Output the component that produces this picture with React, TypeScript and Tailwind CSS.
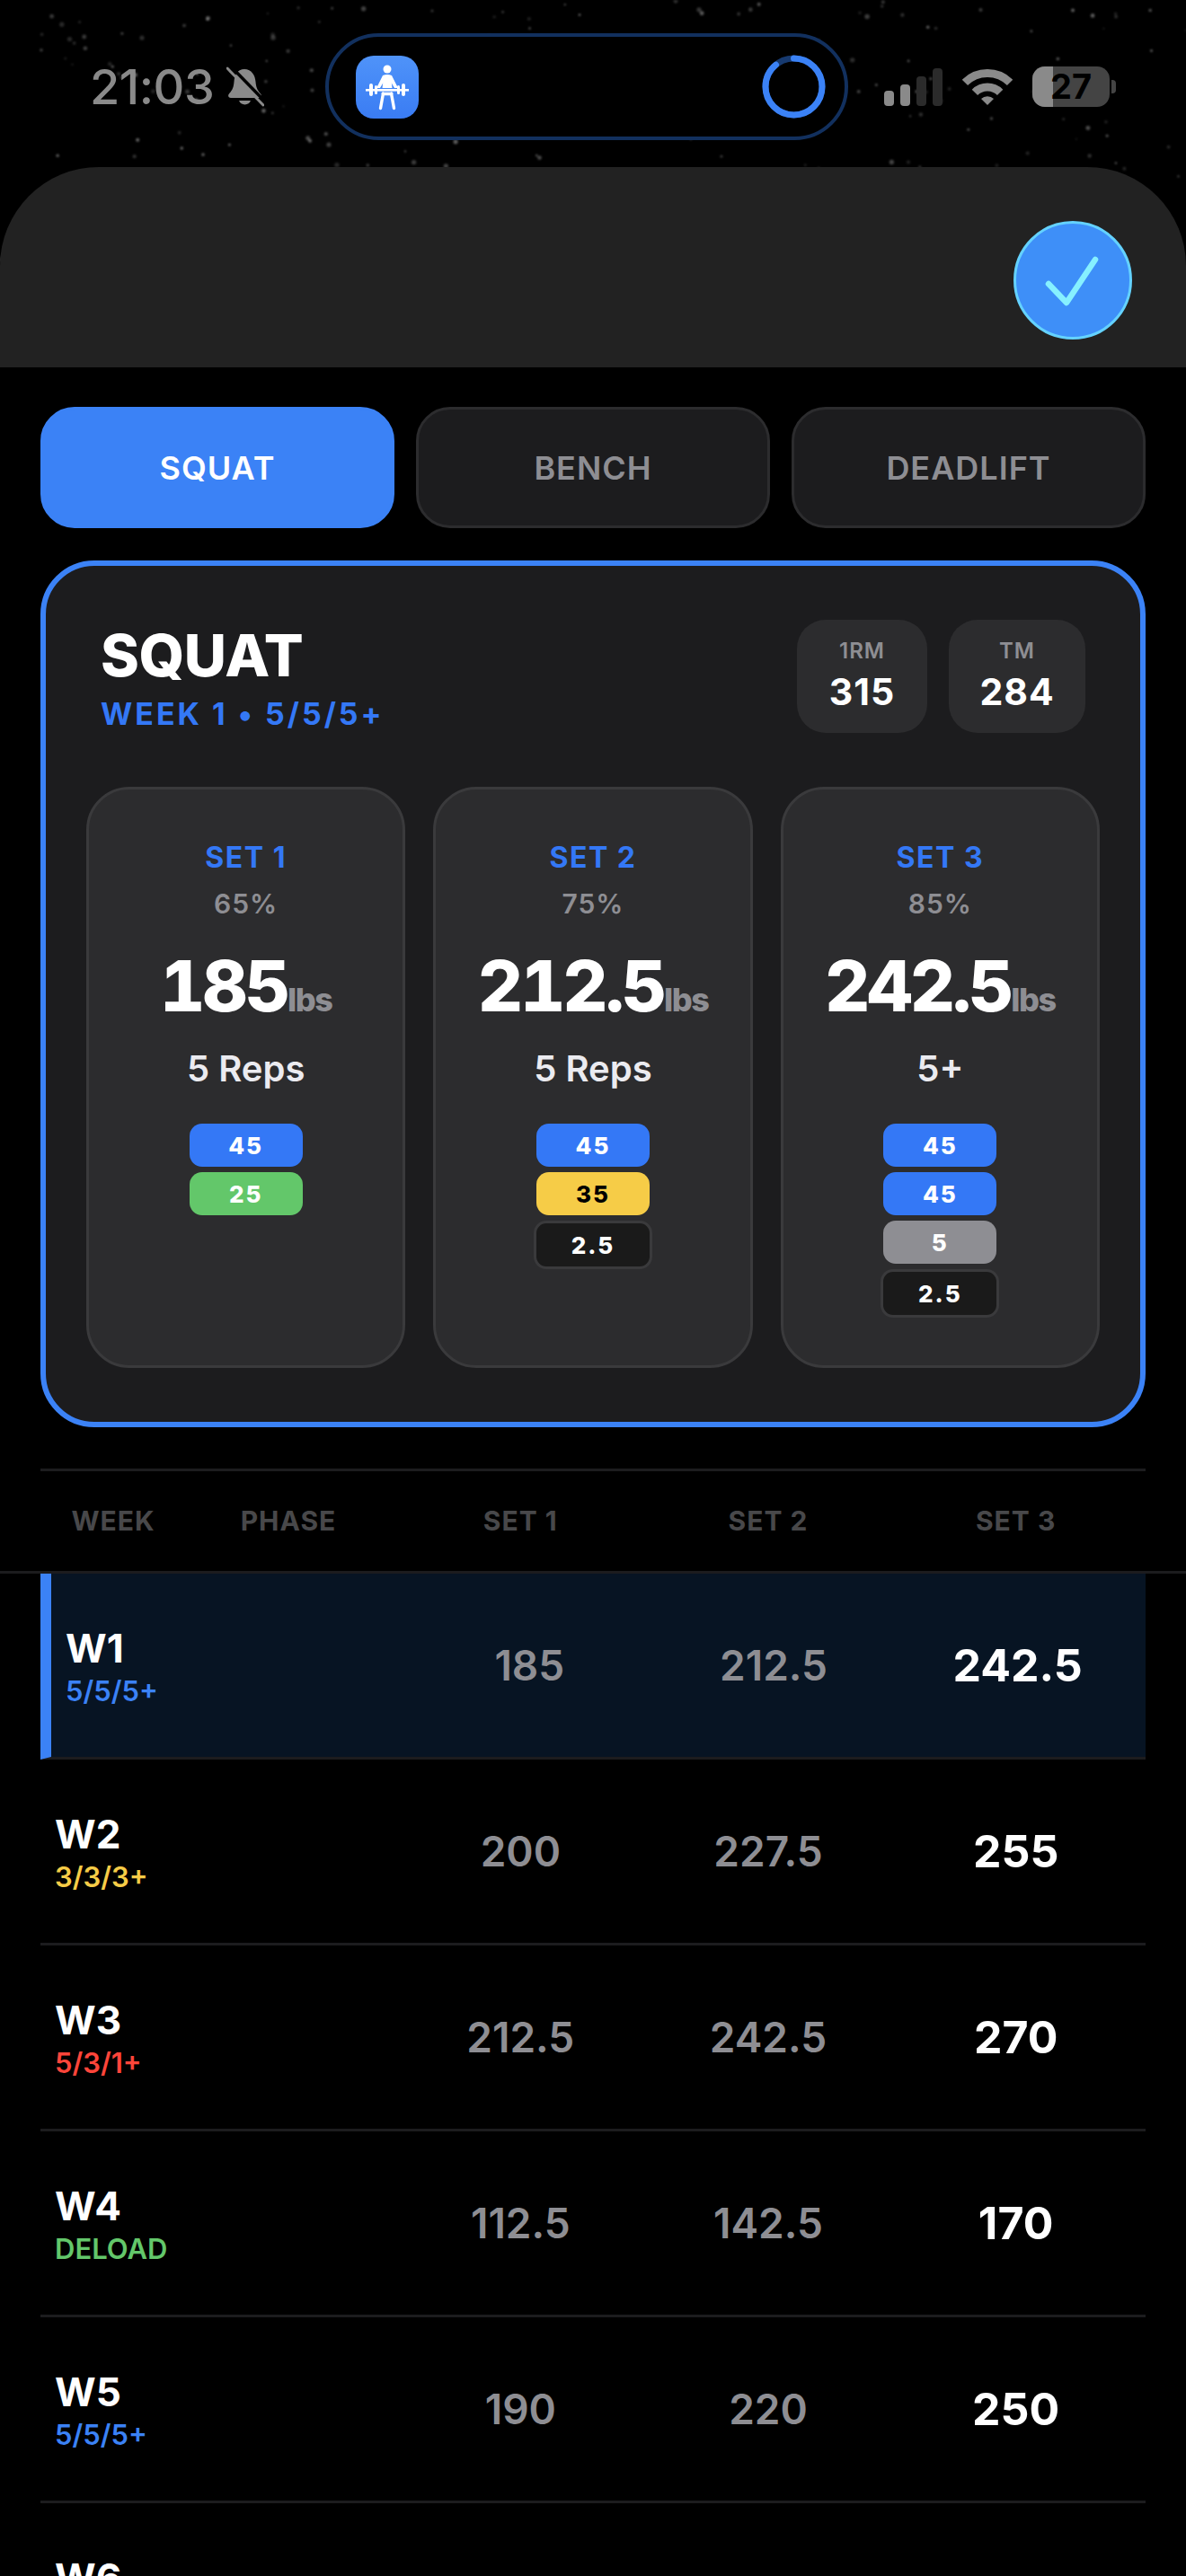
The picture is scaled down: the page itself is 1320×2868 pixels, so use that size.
import React from 'react'

type Plate = { label: string; kind: 'blue' | 'green' | 'yellow' | 'gray' | 'dark' }

const sets: { name: string; pct: string; weight: string; reps: string; plates: Plate[] }[] = [
    { name: 'SET 1', pct: '65%', weight: '185', reps: '5 Reps', plates: [{ label: '45', kind: 'blue' }, { label: '25', kind: 'green' }] },
    { name: 'SET 2', pct: '75%', weight: '212.5', reps: '5 Reps', plates: [{ label: '45', kind: 'blue' }, { label: '35', kind: 'yellow' }, { label: '2.5', kind: 'dark' }] },
    { name: 'SET 3', pct: '85%', weight: '242.5', reps: '5+', plates: [{ label: '45', kind: 'blue' }, { label: '45', kind: 'blue' }, { label: '5', kind: 'gray' }, { label: '2.5', kind: 'dark' }] },
]

const plateStyles: Record<Plate['kind'], string> = {
    blue: 'bg-[#3478f6] text-white',
    green: 'bg-[#63c76a] text-white',
    yellow: 'bg-[#f6cc47] text-black',
    gray: 'bg-[#8e8e93] text-white',
    dark: 'bg-[#1a1a1a] text-white border-[3px] border-[#3a3a3c] box-content',
}

const rows = [
    { week: 'W1', phase: '5/5/5+', color: 'text-[#3b82f6]', a: '185', b: '212.5', c: '242.5', active: true },
    { week: 'W2', phase: '3/3/3+', color: 'text-[#f6cc47]', a: '200', b: '227.5', c: '255' },
    { week: 'W3', phase: '5/3/1+', color: 'text-[#ff453a]', a: '212.5', b: '242.5', c: '270' },
    { week: 'W4', phase: 'DELOAD', color: 'text-[#63c76a]', a: '112.5', b: '142.5', c: '170' },
    { week: 'W5', phase: '5/5/5+', color: 'text-[#3b82f6]', a: '190', b: '220', c: '250' },
    { week: 'W6', phase: '3/3/3+', color: 'text-[#f6cc47]', a: '', b: '', c: '' },
]

// fixed star field behind the status bar
const stars = (() => {
    let seed = 4711
    const rnd = () => {
        seed = (seed * 16807) % 2147483647
        return seed / 2147483647
    }
    return Array.from({ length: 300 }, () => ({
        x: rnd() * 1320,
        y: rnd() * 330,
        r: 1 + rnd() * 1.8,
        o: 0.1 + rnd() * 0.28,
    }))
})()

const BarbellIcon = () => (
    <svg viewBox="0 0 70 70" className="w-[70px] h-[70px]" fill="none">
        <circle cx="35" cy="15" r="4.5" fill="#fff" />
        <path d="M30 22 Q35 20 40 22 L47 36 H43 L39.5 30 H30.5 L27 36 H23 Z" fill="#fff" />
        <path d="M30.5 27 L29.5 36 H40.5 L39.5 27 Z" fill="#fff" />
        <rect x="11" y="37" width="48" height="2.6" fill="#fff" />
        <rect x="15" y="31" width="4" height="14" rx="2" fill="#fff" />
        <rect x="51" y="31" width="4" height="14" rx="2" fill="#fff" />
        <rect x="21" y="33" width="3" height="10" rx="1.5" fill="#fff" />
        <rect x="46" y="33" width="3" height="10" rx="1.5" fill="#fff" />
        <path d="M30.5 42 L27.5 58.5 M39.5 42 L42.5 58.5 M30 42.5 H40" stroke="#fff" strokeWidth="3.4" strokeLinecap="round" />
    </svg>
)

const BellSlash = () => (
    <svg viewBox="0 0 42 46" className="w-[42px] h-[46px]">
        <path d="M20 3 C12 3 9 10 8.5 17 C8 25 5 28 2.5 31 C1.5 33 2.5 35 5 35 H36 C38.5 35 39.5 33 38.5 31 C36 28 33 25 32.5 17 C32 10 28 3 20 3 Z" fill="#8a8a8a" />
        <path d="M14 38 A7 7 0 0 0 27 38 Z" fill="#8a8a8a" />
        <path d="M4 -1 L42 38" stroke="#000" strokeWidth="3.5" />
        <path d="M1 2 L41 43" stroke="#8a8a8a" strokeWidth="3" strokeLinecap="round" />
    </svg>
)

const Signal = () => (
    <svg viewBox="0 0 65 42" className="w-[65px] h-[42px]">
        <rect x="0" y="25" width="11" height="17" rx="4" fill="#8a8a8a" />
        <rect x="18" y="18" width="11" height="24" rx="4" fill="#8a8a8a" />
        <rect x="36" y="9" width="11" height="33" rx="4" fill="#2b2b2b" />
        <rect x="54" y="0" width="11" height="42" rx="4" fill="#2b2b2b" />
    </svg>
)

const Wifi = () => (
    <svg viewBox="0 0 56 42" className="w-[56px] h-[42px]" fill="none">
        <path d="M2.9 15.9 A35.5 35.5 0 0 1 53.1 15.9" stroke="#8a8a8a" strokeWidth="9" />
        <path d="M13.9 26.9 A20 20 0 0 1 42.1 26.9" stroke="#8a8a8a" strokeWidth="9" />
        <path d="M28 41 L21 34 A10 10 0 0 1 35 34 Z" fill="#8a8a8a" />
    </svg>
)

const Ring = () => (
    <svg viewBox="0 0 71 71" className="w-[71px] h-[71px]" fill="none">
        <circle cx="35.5" cy="35.5" r="31.5" stroke="#173a70" strokeWidth="7" />
        <circle cx="35.5" cy="35.5" r="31.5" stroke="#3b82f6" strokeWidth="7" strokeLinecap="round" strokeDasharray="176 198" transform="rotate(-90 35.5 35.5)" />
    </svg>
)

const App = () => {
    return (
        <div className="relative w-[1320px] h-[2868px] overflow-hidden bg-black text-white [font-family:Inter,sans-serif]">
            {/* Stars */}
            <svg viewBox="0 0 1320 330" className="absolute top-0 left-0 w-[1320px] h-[330px] blur-[1px]">
                {stars.map((s, i) => (
                    <circle key={i} cx={s.x} cy={s.y} r={s.r} fill="#fff" opacity={s.o} />
                ))}
            </svg>

            {/* Status bar */}
            <div className="relative h-[186px] pt-[37px] pl-[100px] flex items-start">
                <div className="h-[119px] w-[152px] flex items-center text-[54px] font-medium tracking-[-0.5px] text-[#8a8a8a]">21:03</div>
                <div className="h-[119px] w-[110px] flex items-center"><BellSlash /></div>
                <div className="h-[119px] w-[582px] rounded-[60px] border-[4px] border-[#12305e] bg-black flex items-center justify-between pl-[30px] pr-[21px]">
                    <div className="w-[70px] h-[70px] rounded-[20px] bg-linear-to-b from-[#4f93f9] to-[#3a7cf3]"><BarbellIcon /></div>
                    <Ring />
                </div>
                <div className="h-[119px] ml-[40px] flex items-center gap-[22px]">
                    <Signal />
                    <Wifi />
                    <div className="flex items-center gap-[2px]">
                        <div className="relative w-[86px] h-[45px] rounded-[14px] bg-[#444] flex items-center justify-center">
                            <div className="absolute left-0 top-0 bottom-0 w-[23px] rounded-l-[14px] bg-[#8a8a8a]" />
                            <span className="relative text-[38px] leading-[45px] font-bold text-black">27</span>
                        </div>
                        <div className="w-[5px] h-[15px] rounded-r-[4px] bg-[#444]" />
                    </div>
                </div>
            </div>

            {/* Sheet header */}
            <div className="relative h-[223px] rounded-t-[110px] bg-[#222222] flex justify-end pt-[60px] pr-[60px]">
                <div className="w-[132px] h-[132px] rounded-full bg-[#3e8ff8] border-[3px] border-[#64d2ff] flex items-center justify-center">
                    <svg viewBox="0 0 132 132" className="w-[132px] h-[132px] shrink-0" fill="none">
                        <path d="M39 70 L59 91 L91 43" stroke="#86f0ff" strokeWidth="6.5" strokeLinecap="round" strokeLinejoin="round" />
                    </svg>
                </div>
            </div>

            <div className="px-[45px]">
                {/* Tabs */}
                <div className="pt-[44px] flex gap-[24px]">
                    <div className="flex-1 h-[135px] rounded-[38px] bg-[#3b82f6] border-[3px] border-[#3b82f6] flex items-center justify-center text-[36px] font-semibold tracking-[1px] text-white">SQUAT</div>
                    <div className="flex-1 h-[135px] rounded-[38px] bg-[#1c1c1e] border-[3px] border-[#2c2c2e] flex items-center justify-center text-[36px] font-semibold tracking-[1px] text-[#8e8e93]">BENCH</div>
                    <div className="flex-1 h-[135px] rounded-[38px] bg-[#1c1c1e] border-[3px] border-[#2c2c2e] flex items-center justify-center text-[36px] font-semibold tracking-[1px] text-[#8e8e93]">DEADLIFT</div>
                </div>

                {/* Main card */}
                <div className="mt-[36px] rounded-[60px] border-[6px] border-[#3b82f6] bg-[#1c1c1e] py-[60px] px-[45px]">
                    <div className="px-[16px] h-[126px] flex items-center justify-between">
                        <div className="pt-[4px]">
                            <div className="text-[65px] leading-[72px] font-extrabold tracking-[-0.5px]">SQUAT</div>
                            <div className="mt-[8px] text-[34px] leading-[42px] font-bold tracking-[3px] text-[#3478f6]">WEEK 1 • 5/5/5+</div>
                        </div>
                        <div className="flex gap-[24px]">
                            <div className="w-[145px] h-[126px] rounded-[32px] bg-[#2c2c2e] flex flex-col items-center justify-center">
                                <div className="text-[24px] leading-[30px] font-semibold tracking-[1px] text-[#8e8e93]">1RM</div>
                                <div className="mt-[4px] text-[41px] leading-[52px] font-bold tracking-[1px]">315</div>
                            </div>
                            <div className="w-[152px] h-[126px] rounded-[32px] bg-[#2c2c2e] flex flex-col items-center justify-center">
                                <div className="text-[24px] leading-[30px] font-semibold tracking-[1px] text-[#8e8e93]">TM</div>
                                <div className="mt-[4px] text-[41px] leading-[52px] font-bold tracking-[1px]">284</div>
                            </div>
                        </div>
                    </div>

                    {/* Sets */}
                    <div className="mt-[60px] flex gap-[31px]">
                        {sets.map(set => (
                            <div key={set.name} className="flex-1 h-[647px] rounded-[48px] border-[3px] border-[#3a3a3c] bg-[#2c2c2e] flex flex-col items-center pt-[56px]">
                                <div className="text-[32px] leading-[40px] font-bold tracking-[1.5px] text-[#3478f6]">{set.name}</div>
                                <div className="mt-[11px] text-[30px] leading-[40px] font-semibold tracking-[1px] text-[#8e8e93]">{set.pct}</div>
                                <div className="mt-[27px] h-[90px] flex items-baseline">
                                    <span className="text-[78px] leading-[90px] font-extrabold tracking-[-3px] tabular-nums">{set.weight}</span>
                                    <span className="text-[36px] font-extrabold tracking-[-1.5px] text-[#8e8e93]">lbs</span>
                                </div>
                                <div className="mt-[22px] text-[40px] leading-[50px] font-semibold text-[#ebebf0]">{set.reps}</div>
                                <div className="mt-[36px] flex flex-col items-center gap-[6px]">
                                    {set.plates.map((p, i) => (
                                        <div key={i} className={`w-[126px] h-[48px] rounded-[14px] flex items-center justify-center text-[26px] font-extrabold tracking-[2px] ${plateStyles[p.kind]}`}>{p.label}</div>
                                    ))}
                                </div>
                            </div>
                        ))}
                    </div>
                </div>
            </div>

            {/* Table header */}
            <div className="mt-[46px] border-b-[3px] border-[#1c1c1e]">
                <div className="mx-[45px] border-t-[3px] border-[#1c1c1e] h-[114px] pl-[16px] pr-[16px] grid grid-cols-[130px_222px_1fr_1fr_1fr] gap-x-[19px] items-center text-center text-[30px] font-bold tracking-[1px] text-[#48484a]">
                    <div>WEEK</div>
                    <div>PHASE</div>
                    <div>SET 1</div>
                    <div>SET 2</div>
                    <div>SET 3</div>
                </div>
            </div>

            {/* Table rows */}
            <div className="mx-[45px]">
                {rows.map(r => (
                    <div key={r.week} className={`h-[207px] border-b-[3px] border-[#1c1c1e] pl-[16px] pr-[16px] grid grid-cols-[130px_222px_1fr_1fr_1fr] gap-x-[19px] items-center text-center ${r.active ? 'bg-[#071423] border-l-[12px] border-l-[#3b82f6]' : ''}`}>
                        <div className="col-span-2 text-left pt-[10px]">
                            <div className="text-[44px] leading-[48px] font-bold">{r.week}</div>
                            <div className={`text-[31px] leading-[48px] font-semibold ${r.color}`}>{r.phase}</div>
                        </div>
                        <div className="text-[46px] font-semibold text-[#8e8e93]">{r.a}</div>
                        <div className="text-[46px] font-semibold text-[#8e8e93]">{r.b}</div>
                        <div className="text-[50px] font-bold">{r.c}</div>
                    </div>
                ))}
            </div>
        </div>
    )
}

export default App
